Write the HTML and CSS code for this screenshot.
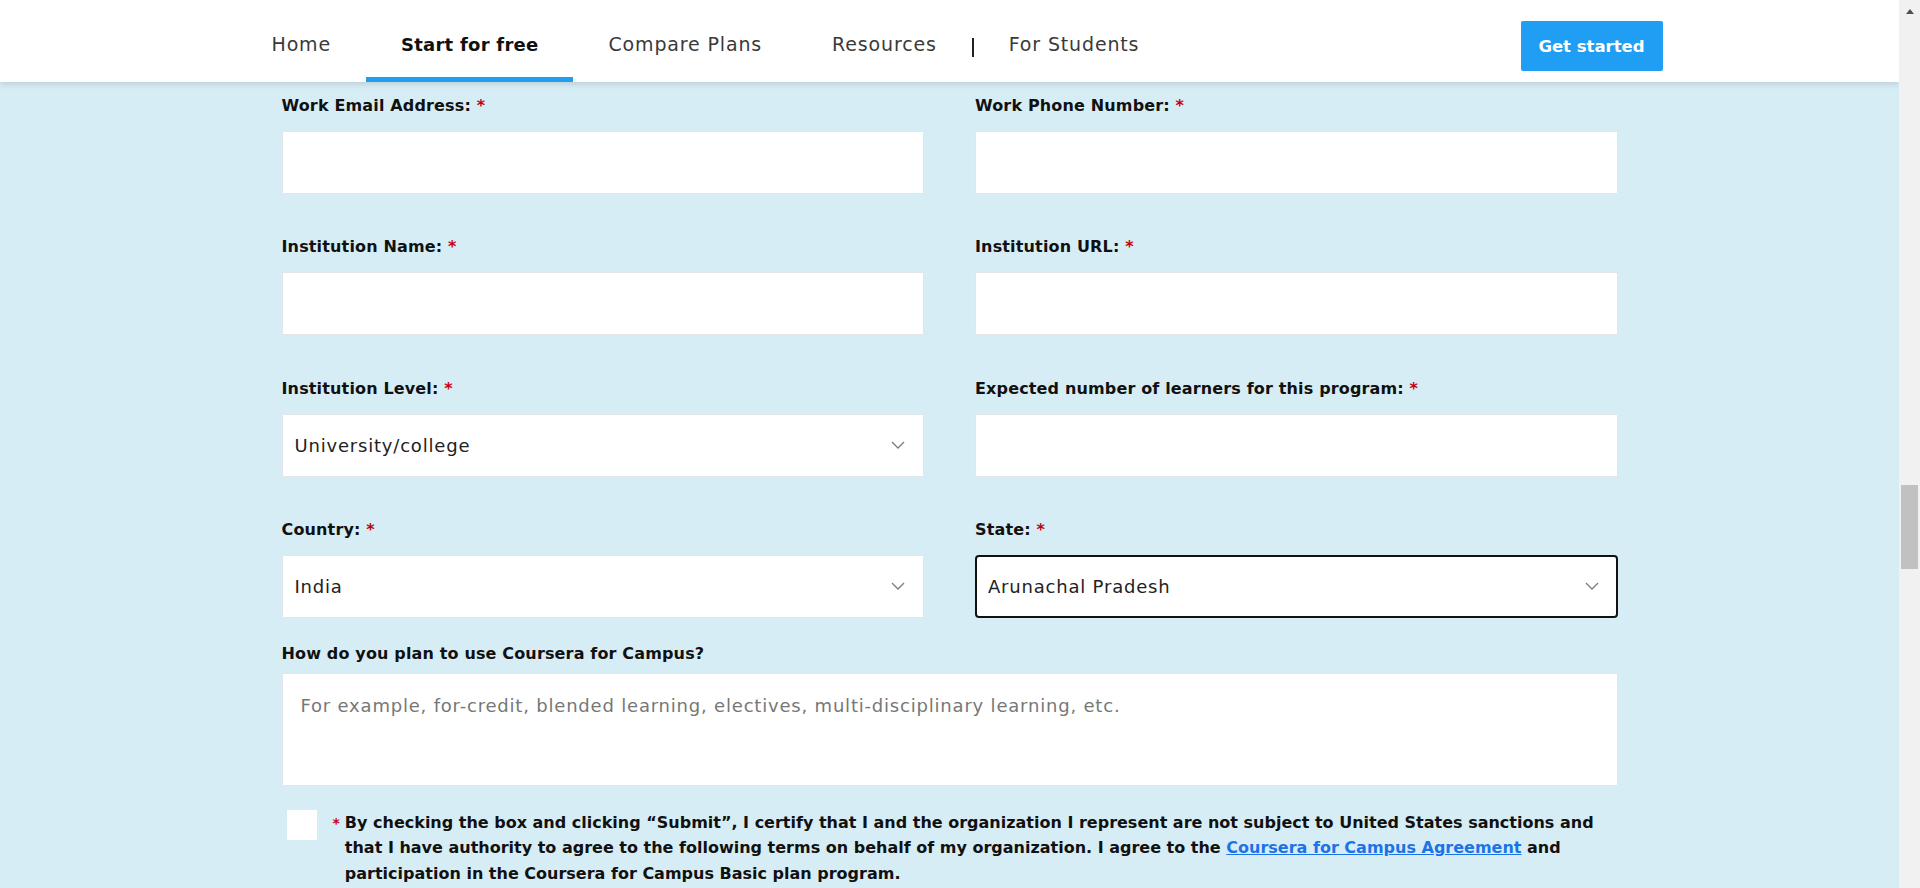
FILE: index.html
```html
<!DOCTYPE html>
<html lang="en">
<head>
<meta charset="utf-8">
<title>Coursera for Campus - Start for free</title>
<link rel="stylesheet" href="styles.css">
</head>
<body>
<div class="page">
  <div class="main">
    <header class="header">
      <nav class="nav">
        <a class="tab">Home</a>
        <a class="tab active">Start for free</a>
        <a class="tab">Compare Plans</a>
        <a class="tab">Resources</a>
        <span class="sep"></span>
        <a class="tab">For Students</a>
        <a class="cta">Get started</a>
      </nav>
    </header>
    <form class="form">
      <div class="grid">
        <div class="field">
          <label class="label">Work Email Address: <span class="req">*</span></label>
          <div class="input"></div>
        </div>
        <div class="field">
          <label class="label">Work Phone Number: <span class="req">*</span></label>
          <div class="input"></div>
        </div>
        <div class="field">
          <label class="label">Institution Name: <span class="req">*</span></label>
          <div class="input"></div>
        </div>
        <div class="field">
          <label class="label">Institution URL: <span class="req">*</span></label>
          <div class="input"></div>
        </div>
        <div class="field">
          <label class="label">Institution Level: <span class="req">*</span></label>
          <div class="input select"><span>University/college</span>
            <svg class="chev" width="14" height="8" viewBox="0 0 14 8"><path d="M1 1l6 6 6-6" fill="none" stroke="#7a7a7a" stroke-width="1.3"/></svg></div>
        </div>
        <div class="field">
          <label class="label">Expected number of learners for this program: <span class="req">*</span></label>
          <div class="input"></div>
        </div>
        <div class="field">
          <label class="label">Country: <span class="req">*</span></label>
          <div class="input select"><span>India</span>
            <svg class="chev" width="14" height="8" viewBox="0 0 14 8"><path d="M1 1l6 6 6-6" fill="none" stroke="#7a7a7a" stroke-width="1.3"/></svg></div>
        </div>
        <div class="field">
          <label class="label">State: <span class="req">*</span></label>
          <div class="input select focused"><span>Arunachal Pradesh</span>
            <svg class="chev" width="14" height="8" viewBox="0 0 14 8"><path d="M1 1l6 6 6-6" fill="none" stroke="#7a7a7a" stroke-width="1.3"/></svg></div>
        </div>
      </div>
      <div class="field wide">
        <label class="label">How do you plan to use Coursera for Campus?</label>
        <div class="textarea">For example, for-credit, blended learning, electives, multi-disciplinary learning, etc.</div>
      </div>
      <div class="consent">
        <span class="box"></span>
        <span class="req star">*</span>
        <p class="consent-text">By checking the box and clicking “Submit”, I certify that I and the organization I represent are not subject to United States sanctions and that I have authority to agree to the following terms on behalf of my organization. I agree to the <a class="link">Coursera for Campus Agreement</a> and participation in the Coursera for Campus Basic plan program.</p>
      </div>
    </form>
  </div>
  <div class="scrollbar">
    <div class="arrow"></div>
    <div class="track"><div class="thumb"></div></div>
  </div>
</div>
</body>
</html>
```

FILE: styles.css
```css
html, body {
  margin: 0;
  padding: 0;
}
body {
  font-family: "DejaVu Sans", "Open Sans", sans-serif;
  color: #1f1f1f;
  background: #d7edf5;
}
.page {
  display: flex;
  height: 888px;
  overflow: hidden;
}
.main {
  flex: 1;
  background: #d7edf5;
  overflow: hidden;
}
.header {
  background: #fff;
  height: 82px;
  box-shadow: 0 2px 6px rgba(0, 0, 0, 0.14);
  position: relative;
  z-index: 1;
}
.nav {
  width: 1426px;
  margin: 0 auto;
  height: 82px;
  display: flex;
}
.tab {
  display: flex;
  align-items: center;
  padding: 11px 35px 0;
  border-bottom: 5px solid transparent;
  font-size: 19px;
  letter-spacing: 0.85px;
  color: #3a3a3a;
}
.tab.active {
  border-bottom-color: #1f9ef4;
  font-weight: 700;
  font-size: 18px;
  letter-spacing: 0.25px;
  color: #111;
}
.sep {
  width: 2px;
  height: 19px;
  background: #222;
  align-self: flex-start;
  margin-top: 38px;
}
.cta {
  margin-left: auto;
  align-self: flex-start;
  margin-top: 21px;
  width: 142px;
  height: 50px;
  background: #1f9ef4;
  border-radius: 2px;
  color: #fff;
  font-weight: 700;
  font-size: 16.5px;
  display: flex;
  align-items: center;
  justify-content: center;
}
.form {
  width: 1336px;
  margin: 0 auto;
  padding-top: 14px;
}
.grid {
  display: grid;
  grid-template-columns: 1fr 1fr;
  column-gap: 51px;
  row-gap: 43.3px;
}
.label {
  display: block;
  font-size: 16px;
  font-weight: 700;
  letter-spacing: 0.15px;
  line-height: 20px;
  color: #111;
  margin-bottom: 15px;
}
.req {
  color: #c4000a;
}
.input {
  height: 63px;
  box-sizing: border-box;
  background: #fff;
  border: 1px solid #e2e6e8;
}
.select {
  display: flex;
  align-items: center;
  justify-content: space-between;
  padding: 0 18px 0 12px;
  font-size: 18px;
  letter-spacing: 0.8px;
  color: #222;
}
.select.focused {
  border: 2px solid #111;
  border-radius: 4px;
  padding-left: 11px;
  padding-right: 17px;
}
.wide {
  margin-top: 26px;
}
.wide .label {
  margin-bottom: 9px;
}
.textarea {
  height: 113px;
  box-sizing: border-box;
  background: #fff;
  border: 1px solid #e2e6e8;
  padding: 21px 18px;
  font-size: 18px;
  letter-spacing: 0.8px;
  color: #777;
}
.consent {
  display: flex;
  align-items: flex-start;
  margin-top: 24px;
  padding-left: 5px;
}
.box {
  width: 30px;
  height: 30px;
  background: #fff;
  flex: none;
  margin-right: 16px;
}
.star {
  font-size: 14px;
  font-weight: 700;
  line-height: 26px;
  margin-right: 5px;
}
.consent-text {
  margin: 0;
  font-size: 16px;
  font-weight: 700;
  line-height: 25.5px;
  color: #111;
  width: 1265px;
}
.link {
  color: #1a73e8;
  text-decoration: underline;
}
.scrollbar {
  width: 21px;
  background: #f1f1f1;
  display: flex;
  flex-direction: column;
  align-items: center;
}
.arrow {
  margin-top: 9px;
  width: 0;
  height: 0;
  border-left: 4.5px solid transparent;
  border-right: 4.5px solid transparent;
  border-bottom: 5px solid #505050;
}
.track {
  flex: 1;
  width: 100%;
}
.thumb {
  margin: 471px 2px 0;
  height: 84px;
  background: #c1c1c1;
}
```
